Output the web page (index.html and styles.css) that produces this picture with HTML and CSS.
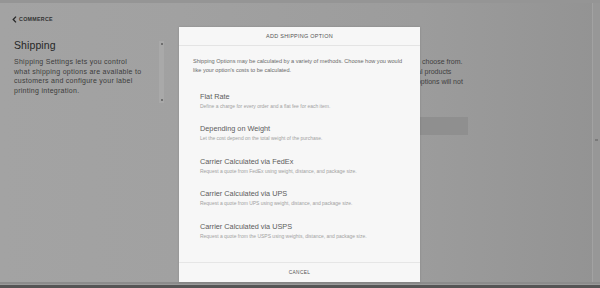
FILE: index.html
```html
<!DOCTYPE html>
<html lang="en">
<head>
<meta charset="utf-8">
<title>Add Shipping Option</title>
<link rel="stylesheet" href="styles.css">
</head>
<body>
<div class="app">
  <div class="topbar"></div>
  <div class="workspace">
    <aside class="sidebar">
      <a class="back" href="#">
        <svg class="chev" width="5" height="7" viewBox="0 0 5 7"><polyline points="4,0.6 1.2,3.5 4,6.4" fill="none" stroke="#262626" stroke-width="1.3"/></svg>
        <span>COMMERCE</span>
      </a>
      <h1 class="title">Shipping</h1>
      <p class="desc">Shipping Settings lets you control<br>what shipping options are available to<br>customers and configure your label<br>printing integration.</p>
    </aside>
    <div class="scroller">
      <div class="track"><span class="tick"></span><span class="tick"></span></div>
    </div>
    <main class="content">
      <p class="lead">Shipping options are the methods customers can choose from.<br>Delivery options apply to all of the store's physical products<br>sold in your store. Digital products and services options will not</p>
      <div class="addbox"></div>
    </main>
    <div class="rscroll"><span class="rtick"></span></div>
  </div>
  <div class="bottombar"></div>
</div>

<div class="modal">
  <header class="mhead">ADD SHIPPING OPTION</header>
  <div class="mbody">
    <p class="intro">Shipping Options may be calculated by a variety of methods. Choose how you would<br>like your option's costs to be calculated.</p>
    <ul class="options">
      <li class="option"><div class="otitle">Flat Rate</div><div class="odesc">Define a charge for every order and a flat fee for each item.</div></li>
      <li class="option"><div class="otitle">Depending on Weight</div><div class="odesc">Let the cost depend on the total weight of the purchase.</div></li>
      <li class="option"><div class="otitle">Carrier Calculated via FedEx</div><div class="odesc">Request a quote from FedEx using weight, distance, and package size.</div></li>
      <li class="option"><div class="otitle">Carrier Calculated via UPS</div><div class="odesc">Request a quote from UPS using weight, distance, and package size.</div></li>
      <li class="option"><div class="otitle">Carrier Calculated via USPS</div><div class="odesc">Request a quote from the USPS using weights, distance, and package size.</div></li>
    </ul>
  </div>
  <footer class="mfoot">CANCEL</footer>
</div>
</body>
</html>
```
FILE: styles.css
```css
html, body {
  margin: 0;
  padding: 0;
}
body {
  width: 600px;
  height: 288px;
  overflow: hidden;
  font-family: "Liberation Sans", Arial, sans-serif;
  background: #9a9a9a;
  position: relative;
}
.app {
  height: 288px;
  display: flex;
  flex-direction: column;
}
.topbar {
  height: 3px;
  background: #959595;
}
.workspace {
  flex: 1;
  display: flex;
  background: linear-gradient(to right, #a3a3a3 0%, #a1a1a1 30%, #9c9c9c 70%, #939393 100%);
}
.sidebar {
  width: 158px;
  padding: 11px 0 0 14px;
  box-sizing: border-box;
}
.back {
  display: flex;
  align-items: center;
  gap: 2px;
  height: 10px;
  margin-left: -2px;
  text-decoration: none;
  color: #333;
  font-size: 5.3px;
  letter-spacing: 0.3px;
  font-weight: bold;
}
.chev {
  display: block;
}
.title {
  margin: 14px 0 0;
  font-size: 10.5px;
  line-height: 14px;
  font-weight: normal;
  color: #262626;
  letter-spacing: 0.1px;
}
.desc {
  margin: 5px 0 0;
  font-size: 7px;
  line-height: 9.7px;
  color: #3c3c3c;
  letter-spacing: 0.28px;
  white-space: nowrap;
}
.scroller {
  width: 8px;
  padding-top: 38px;
}
.track {
  height: 62px;
  width: 5px;
  margin-left: 1px;
  background: #a9a9a9;
  display: flex;
  flex-direction: column;
  justify-content: space-between;
  align-items: center;
  padding: 2px 0;
  box-sizing: border-box;
}
.tick {
  width: 2px;
  height: 2px;
  background: #6f6f6f;
}
.content {
  flex: 1;
  padding: 54px 0 0 102.3px;
  box-sizing: border-box;
  overflow: hidden;
}
.lead {
  margin: 0;
  white-space: nowrap;
  font-size: 7px;
  line-height: 10px;
  color: #404040;
}
.addbox {
  margin-top: 30px;
  width: 200px;
  height: 18px;
  background: #8f8f8f;
}
.rscroll {
  width: 8px;
  background: #979797;
  border-left: 1px solid #a2a2a2;
  box-sizing: border-box;
  padding-top: 136px;
}
.rtick {
  display: block;
  width: 3px;
  height: 2px;
  margin-left: 2px;
  background: #7a7a7a;
}
.bottombar {
  height: 6px;
  background: linear-gradient(to bottom, #8c8c8c 0, #8c8c8c 2px, #9a9a9a 2px, #9a9a9a 3px, #555 3px);
}

/* modal */
.modal {
  position: absolute;
  left: 179px;
  top: 27px;
  width: 241px;
  height: 255px;
  background: #f7f7f7;
  display: flex;
  flex-direction: column;
  box-shadow: 0 0 2px rgba(0,0,0,0.15);
}
.mhead {
  height: 18px;
  line-height: 18px;
  border-bottom: 1px solid #e4e4e4;
  text-align: center;
  font-size: 5.5px;
  letter-spacing: 0.25px;
  color: #555;
}
.mbody {
  flex: 1;
  padding: 11px 14px 0;
}
.intro {
  margin: 0;
  white-space: nowrap;
  font-size: 5.58px;
  line-height: 9.3px;
  color: #6a6a6a;
}
.options {
  list-style: none;
  margin: 9px 0 0;
  padding: 0;
}
.option {
  padding: 7.25px 7px;
}
.otitle {
  font-size: 7.3px;
  line-height: 10px;
  color: #5c5c5c;
}
.odesc {
  font-size: 4.98px;
  line-height: 8px;
  color: #a2a2a2;
  white-space: nowrap;
}
.mfoot {
  height: 19px;
  line-height: 19px;
  border-top: 1px solid #e6e6e6;
  text-align: center;
  font-size: 4.8px;
  letter-spacing: 0.35px;
  color: #555;
}
```
